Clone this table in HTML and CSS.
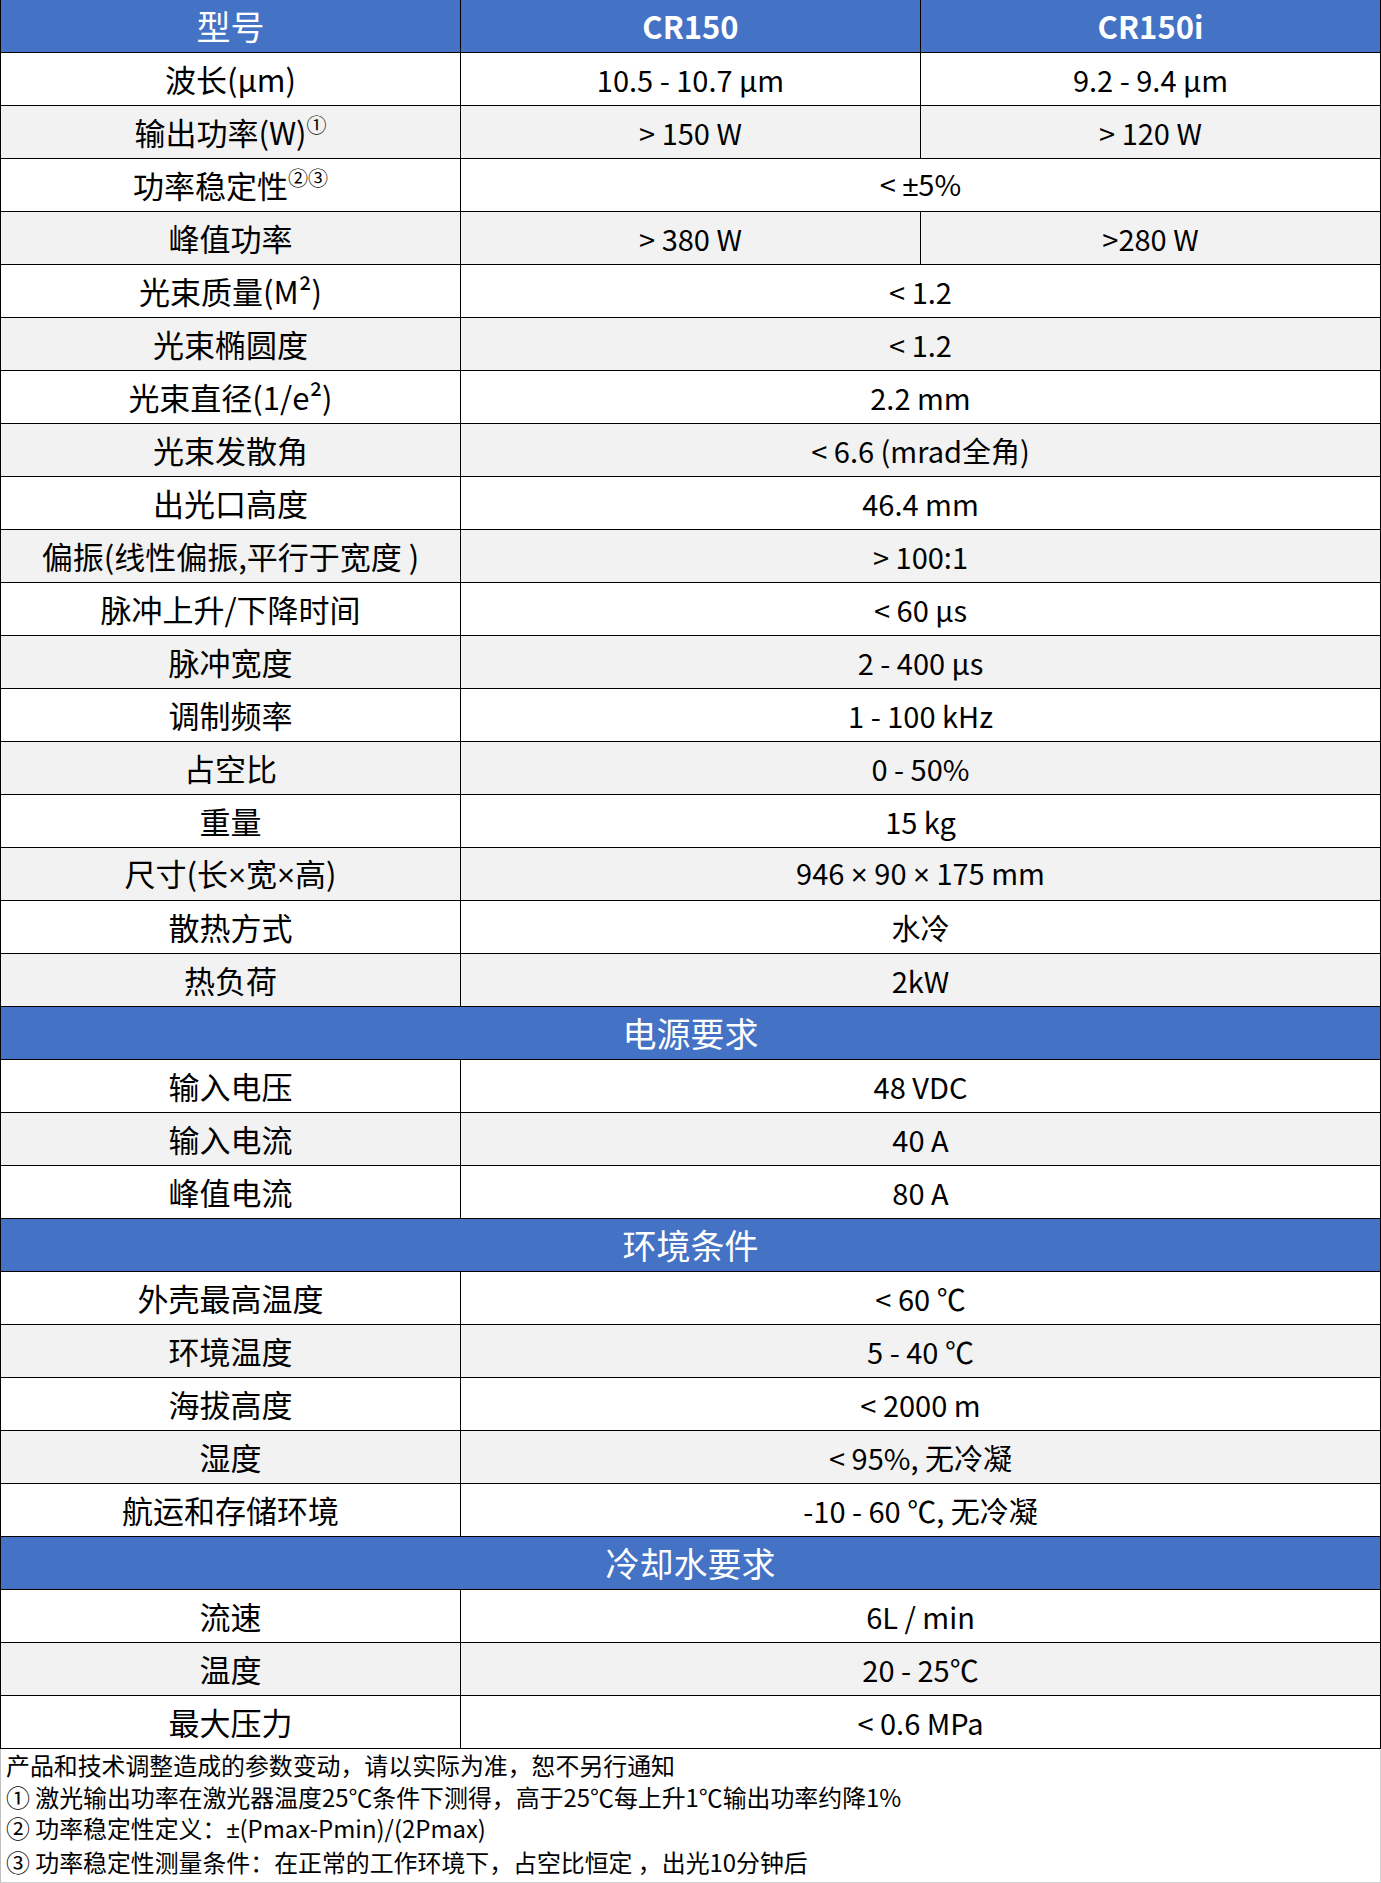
FILE: index.html
```html
<!DOCTYPE html>
<html lang="zh-CN">
<head>
<meta charset="utf-8">
<title>CR150 / CR150i 规格参数</title>
<link rel="stylesheet" href="styles.css">
</head>
<body>
<div class="sheet">
  <div class="row head">
    <div class="cell">型号</div>
    <div class="cell model">CR150</div>
    <div class="cell model">CR150i</div>
  </div>

  <div class="row"><div class="cell">波长(µm)</div><div class="cell val">10.5 - 10.7 µm</div><div class="cell val">9.2 - 9.4 µm</div></div>
  <div class="row alt"><div class="cell"><span>输出功率(W)<sup>①</sup></span></div><div class="cell val">&gt; 150 W</div><div class="cell val">&gt; 120 W</div></div>
  <div class="row"><div class="cell"><span>功率稳定性<sup>②③</sup></span></div><div class="cell val span2"><span>&lt; <span class="sym">±</span>5%</span></div></div>
  <div class="row alt"><div class="cell">峰值功率</div><div class="cell val">&gt; 380 W</div><div class="cell val">&gt;280 W</div></div>
  <div class="row"><div class="cell">光束质量(M²)</div><div class="cell val span2">&lt; 1.2</div></div>
  <div class="row alt"><div class="cell">光束椭圆度</div><div class="cell val span2">&lt; 1.2</div></div>
  <div class="row"><div class="cell">光束直径(1/e²)</div><div class="cell val span2">2.2 mm</div></div>
  <div class="row alt"><div class="cell">光束发散角</div><div class="cell val span2">&lt; 6.6 (mrad全角)</div></div>
  <div class="row"><div class="cell">出光口高度</div><div class="cell val span2">46.4 mm</div></div>
  <div class="row alt"><div class="cell">偏振(线性偏振,平行于宽度 )</div><div class="cell val span2">&gt; 100:1</div></div>
  <div class="row"><div class="cell">脉冲上升/下降时间</div><div class="cell val span2">&lt; 60 µs</div></div>
  <div class="row alt"><div class="cell">脉冲宽度</div><div class="cell val span2">2 - 400 µs</div></div>
  <div class="row"><div class="cell">调制频率</div><div class="cell val span2">1 - 100 kHz</div></div>
  <div class="row alt"><div class="cell">占空比</div><div class="cell val span2">0 - 50%</div></div>
  <div class="row"><div class="cell">重量</div><div class="cell val span2">15 kg</div></div>
  <div class="row alt"><div class="cell"><span>尺寸(长<span class="sym">×</span>宽<span class="sym">×</span>高)</span></div><div class="cell val span2"><span>946 <span class="sym">×</span> 90 <span class="sym">×</span> 175 mm</span></div></div>
  <div class="row"><div class="cell">散热方式</div><div class="cell val span2">水冷</div></div>
  <div class="row alt"><div class="cell">热负荷</div><div class="cell val span2">2kW</div></div>

  <div class="row section"><div class="cell full">电源要求</div></div>
  <div class="row"><div class="cell">输入电压</div><div class="cell val span2">48 VDC</div></div>
  <div class="row alt"><div class="cell">输入电流</div><div class="cell val span2">40 A</div></div>
  <div class="row"><div class="cell">峰值电流</div><div class="cell val span2">80 A</div></div>

  <div class="row section"><div class="cell full">环境条件</div></div>
  <div class="row"><div class="cell">外壳最高温度</div><div class="cell val span2">&lt; 60 ℃</div></div>
  <div class="row alt"><div class="cell">环境温度</div><div class="cell val span2">5 - 40 ℃</div></div>
  <div class="row"><div class="cell">海拔高度</div><div class="cell val span2">&lt; 2000 m</div></div>
  <div class="row alt"><div class="cell">湿度</div><div class="cell val span2">&lt; 95%, 无冷凝</div></div>
  <div class="row"><div class="cell">航运和存储环境</div><div class="cell val span2">-10 - 60 ℃, 无冷凝</div></div>

  <div class="row section"><div class="cell full">冷却水要求</div></div>
  <div class="row"><div class="cell">流速</div><div class="cell val span2">6L / min</div></div>
  <div class="row alt"><div class="cell">温度</div><div class="cell val span2">20 - 25℃</div></div>
  <div class="row"><div class="cell">最大压力</div><div class="cell val span2">&lt; 0.6 MPa</div></div>

  <div class="notes">
    <p>产品和技术调整造成的参数变动，请以实际为准，恕不另行通知</p>
    <p>① 激光输出功率在激光器温度25℃条件下测得，高于25℃每上升1℃输出功率约降1%</p>
    <p>② 功率稳定性定义：<span class="sym">±</span>(Pmax-Pmin)/(2Pmax)</p>
    <p>③ 功率稳定性测量条件：在正常的工作环境下，占空比恒定 ，出光10分钟后</p>
  </div>
</div>
</body>
</html>
```

FILE: styles.css
```css
html, body {
  margin: 0;
  padding: 0;
  background: #ffffff;
}

body {
  font-family: "Noto Sans CJK SC", "Noto Sans", sans-serif;
  color: #000000;
}

.sheet {
  width: 1381px;
}

.row {
  display: grid;
  grid-template-columns: 460px 460px 460px;
  height: 53px;
  box-sizing: border-box;
  border-left: 1px solid #000000;
  border-bottom: 1px solid #000000;
  background: #ffffff;
}

.row.alt {
  background: #f2f2f2;
}

.cell {
  display: flex;
  align-items: center;
  justify-content: center;
  border-right: 1px solid #000000;
  font-size: 31px;
  line-height: 1.2;
  white-space: nowrap;
  overflow: hidden;
}

.cell.val {
  font-size: 29px;
}

.span2 {
  grid-column: 2 / 4;
}

.full {
  grid-column: 1 / 4;
}

.head,
.section {
  background: #4472c4;
  color: #ffffff;
}

.head .cell,
.section .cell {
  font-size: 34px;
}

.head .cell.model {
  font-weight: 700;
  font-size: 31px;
}

.sym {
  font-family: "Liberation Sans", "Noto Sans", sans-serif;
}

sup {
  font-size: 20px;
  line-height: 0;
  vertical-align: 12px;
}

.notes {
  height: 134px;
  box-sizing: border-box;
  border-left: 1px solid #bfbfbf;
  border-right: 1px solid #d0d0d0;
  border-bottom: 1px solid #d0d0d0;
  padding-left: 5px;
  font-size: 23.9px;
  line-height: 31.5px;
}

.notes p {
  margin: 0;
  white-space: nowrap;
}
```
